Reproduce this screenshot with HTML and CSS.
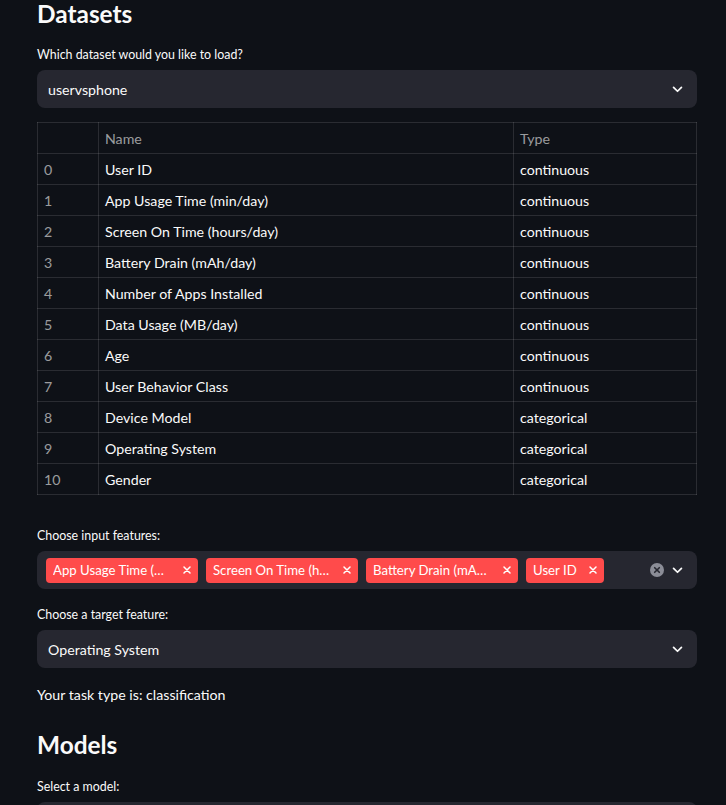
FILE: index.html
```html
<!DOCTYPE html>
<html>
<head>
<meta charset="utf-8">
<link rel="stylesheet" href="styles.css">
</head>
<body>
<main class="page">
  <h2 class="heading">Datasets</h2>
  <div class="label label-first">Which dataset would you like to load?</div>
  <div class="select">
    <span class="select-value">uservsphone</span>
    <svg class="chev" viewBox="0 0 12 8" width="12" height="8"><path d="M1.5 1.5 L6 6 L10.5 1.5" fill="none" stroke="#fafafa" stroke-width="2" stroke-linecap="round" stroke-linejoin="round"/></svg>
  </div>

  <table class="table">
    <thead>
      <tr><th class="idx"></th><th class="name">Name</th><th>Type</th></tr>
    </thead>
    <tbody>
      <tr><td class="idx">0</td><td>User ID</td><td>continuous</td></tr>
      <tr><td class="idx">1</td><td>App Usage Time (min/day)</td><td>continuous</td></tr>
      <tr><td class="idx">2</td><td>Screen On Time (hours/day)</td><td>continuous</td></tr>
      <tr><td class="idx">3</td><td>Battery Drain (mAh/day)</td><td>continuous</td></tr>
      <tr><td class="idx">4</td><td>Number of Apps Installed</td><td>continuous</td></tr>
      <tr><td class="idx">5</td><td>Data Usage (MB/day)</td><td>continuous</td></tr>
      <tr><td class="idx">6</td><td>Age</td><td>continuous</td></tr>
      <tr><td class="idx">7</td><td>User Behavior Class</td><td>continuous</td></tr>
      <tr><td class="idx">8</td><td>Device Model</td><td>categorical</td></tr>
      <tr><td class="idx">9</td><td>Operating System</td><td>categorical</td></tr>
      <tr><td class="idx">10</td><td>Gender</td><td>categorical</td></tr>
    </tbody>
  </table>

  <div class="label label-features">Choose input features:</div>
  <div class="select multi">
    <div class="tags">
      <span class="tag"><span class="tag-text">App Usage Time (min/day)</span><svg class="tag-x" viewBox="0 0 8 8" width="8" height="8"><path d="M1 1 L7 7 M7 1 L1 7" stroke="#fff" stroke-width="1.5" stroke-linecap="round"/></svg></span>
      <span class="tag"><span class="tag-text">Screen On Time (hours/day)</span><svg class="tag-x" viewBox="0 0 8 8" width="8" height="8"><path d="M1 1 L7 7 M7 1 L1 7" stroke="#fff" stroke-width="1.5" stroke-linecap="round"/></svg></span>
      <span class="tag"><span class="tag-text">Battery Drain (mAh/day)</span><svg class="tag-x" viewBox="0 0 8 8" width="8" height="8"><path d="M1 1 L7 7 M7 1 L1 7" stroke="#fff" stroke-width="1.5" stroke-linecap="round"/></svg></span>
      <span class="tag"><span class="tag-text">User ID</span><svg class="tag-x" viewBox="0 0 8 8" width="8" height="8"><path d="M1 1 L7 7 M7 1 L1 7" stroke="#fff" stroke-width="1.5" stroke-linecap="round"/></svg></span>
    </div>
    <div class="controls">
      <svg class="clear" viewBox="0 0 14 14" width="14" height="14"><circle cx="7" cy="7" r="7" fill="#8b8d97"/><path d="M4.7 4.7 L9.3 9.3 M9.3 4.7 L4.7 9.3" stroke="#262730" stroke-width="1.6" stroke-linecap="round"/></svg>
      <svg class="chev" viewBox="0 0 12 8" width="12" height="8"><path d="M1.5 1.5 L6 6 L10.5 1.5" fill="none" stroke="#fafafa" stroke-width="2" stroke-linecap="round" stroke-linejoin="round"/></svg>
    </div>
  </div>

  <div class="label label-target">Choose a target feature:</div>
  <div class="select">
    <span class="select-value">Operating System</span>
    <svg class="chev" viewBox="0 0 12 8" width="12" height="8"><path d="M1.5 1.5 L6 6 L10.5 1.5" fill="none" stroke="#fafafa" stroke-width="2" stroke-linecap="round" stroke-linejoin="round"/></svg>
  </div>

  <p class="task">Your task type is: classification</p>

  <h2 class="heading heading-models">Models</h2>
  <div class="label label-model">Select a model:</div>
  <div class="select"></div>
</main>
</body>
</html>
```

FILE: styles.css
```css
html, body {
  margin: 0;
  padding: 0;
  background: #0e1117;
  color: #fafafa;
  font-family: Lato, "Liberation Sans", sans-serif;
  overflow: hidden;
}

.page {
  width: 660px;
  padding: 0 29px 0 37px;
  display: flex;
  flex-direction: column;
}

.heading {
  margin: 0;
  font-size: 24.4px;
  font-weight: 700;
  line-height: 28px;
  height: 28px;
}

.heading-models {
  margin-top: 24px;
}

.label {
  font-size: 12.4px;
  line-height: 20px;
  height: 20px;
  margin-bottom: 5px;
}

.label-first { margin-top: 17px; }
.label-features { margin-top: 31px; }
.label-target { margin-top: 16px; }
.label-model { margin-top: 18px; }

.select {
  height: 38px;
  background: #262730;
  border-radius: 8px;
  display: flex;
  align-items: center;
  justify-content: space-between;
  padding: 0 14px 0 11px;
  box-sizing: border-box;
  font-size: 14.2px;
}

.chev {
  display: block;
  width: 11px;
  height: 7px;
}

.table {
  margin-top: 14px;
  width: 660px;
  border-collapse: collapse;
  font-size: 14.2px;
}

.table th, .table td {
  border: 1px solid rgba(250, 250, 250, 0.12);
  height: 31px;
  padding: 0 6px;
  text-align: left;
  font-weight: 400;
  box-sizing: border-box;
}

.table th {
  color: rgba(250, 250, 250, 0.6);
}

.table td.idx {
  color: rgba(250, 250, 250, 0.6);
  width: 61px;
}

.table th.idx { width: 61px; }
.table th.name { width: 415px; }

.multi {
  padding: 0 14px 0 9px;
}

.tags {
  display: flex;
  gap: 8px;
}

.tag {
  background: #ff4b4b;
  color: #fff;
  height: 25px;
  border-radius: 4px;
  display: flex;
  align-items: center;
  padding: 0 7px;
  font-size: 13.2px;
  gap: 12px;
}

.tag-text {
  white-space: nowrap;
  overflow: hidden;
  text-overflow: ellipsis;
  max-width: 118px;
}

.tag-x {
  display: block;
  flex: none;
}

.controls {
  display: flex;
  align-items: center;
  gap: 8px;
}

.clear { display: block; }

.task {
  margin: 15px 0 0;
  font-size: 14.2px;
  line-height: 24px;
}
```
